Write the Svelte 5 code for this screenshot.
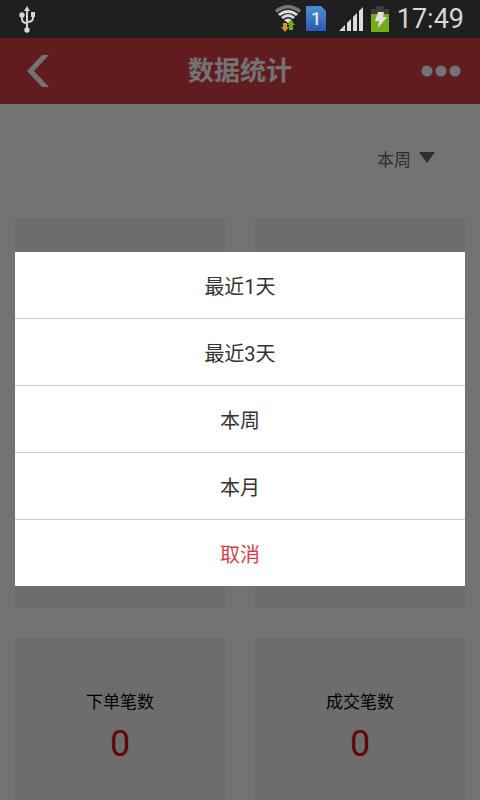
<script lang="ts">
	const ranges = ['最近1天', '最近3天', '本周', '本月'];

	const stats = [
		{ id: 1 },
		{ id: 2 },
		{ id: 3 },
		{ id: 4 },
		{ id: 5, label: '下单笔数', value: 0 },
		{ id: 6, label: '成交笔数', value: 0 },
	];

	let selected = $state('本周');
	let open = $state(true);

	function pick(range: string) {
		selected = range;
		open = false;
	}
</script>

<div class="screen">
	<div class="status">
		<svg class="usb" width="18" height="28" viewBox="0 0 18 28" fill="none" stroke="#d6d6d6" stroke-width="2">
			<path d="M9 5v19M4 10v4c0 3 2 4 5 4M15 9v4c0 3-3 4-6 4" />
			<path d="M9 1l3 5H6zM13 7h4v5h-4z" fill="#d6d6d6" stroke="none" />
			<circle cx="4" cy="10" r="2.700" fill="#d6d6d6" stroke="none" />
			<circle cx="9" cy="25" r="2.700" fill="#d6d6d6" stroke="none" />
		</svg>
		<div class="tray">
			<svg width="28" height="28" viewBox="0 0 28 28">
				<path d="M1 5Q14-5 27 5l-2 3Q14-1 3 8z" fill="#777" />
				<path d="M4 9Q14 1 24 9l-2 2Q14 5 6 11z" fill="#dcdcdc" />
				<path d="M7 12Q14 6 21 12l-2 2Q14 10 9 14z" fill="#dcdcdc" />
				<path d="M10 15Q14 12 18 15l-4 3z" fill="#dcdcdc" />
				<path d="M9 18h4v4h2l-4 5-4-5h2z" fill="#dd8a34" />
				<path d="M17 15l4 5h-2v5h-4v-5h-2z" fill="#74a91c" />
			</svg>
			<svg width="20" height="26" viewBox="0 0 20 26">
				<defs>
					<linearGradient id="sim" x2="0" y2="1">
						<stop offset="0" stop-color="#4b8fd0" />
						<stop offset="1" stop-color="#2c59b5" />
					</linearGradient>
				</defs>
				<path d="M0 0h15l5 5v20H0z" fill="url(#sim)" />
				<text x="10" y="19" text-anchor="middle">1</text>
			</svg>
			<svg class="signal" width="24" height="24" viewBox="0 0 24 24" fill="#dcdcdc">
				<path d="M0 24l6-6v6zM8 24v-8l4-4v12zM14 24V10l4-4v18zM20 24V4l4-4v24z" />
			</svg>
			<svg class="battery" width="18" height="26" viewBox="0 0 18 26">
				<path d="M5 0h8v3h5v5H0V3h5z" fill="#3c3c3c" />
				<path d="M0 8h18v18H0z" fill="#78ab18" />
				<path d="M7 6h6l-1 5h4L7 22l1-7H4z" fill="#e0e0e0" />
			</svg>
			<time>17:49</time>
		</div>
	</div>

	<header>
		<button class="icon" aria-label="返回">
			<svg width="22" height="32" viewBox="0 0 22 32" fill="#fff">
				<path d="M15 0h7L7 16l15 16h-7L0 16z" />
			</svg>
		</button>
		<h1>数据统计</h1>
		<button class="icon more" aria-label="更多">
			<svg width="40" height="12" viewBox="0 0 40 12" fill="#fff">
				<circle cx="6" cy="6" r="5.500" />
				<circle cx="20" cy="6" r="5.500" />
				<circle cx="34" cy="6" r="5.500" />
			</svg>
		</button>
	</header>

	<main>
		<button class="filter" onclick={() => (open = true)}>
			{selected}
			<svg width="16" height="12" viewBox="0 0 16 12" fill="#666"><path d="M0 0h16L8 11z" /></svg>
		</button>
		<div class="grid">
			{#each stats as s (s.id)}
				<section class="card">
					{#if s.label}
						<h2>{s.label}</h2>
						<p>{s.value}</p>
					{/if}
				</section>
			{/each}
		</div>
	</main>

	{#if open}
		<div class="mask">
			<div class="sheet" role="dialog" aria-modal="true">
				{#each ranges as range (range)}
					<button onclick={() => pick(range)}>{range}</button>
				{/each}
				<button class="cancel" onclick={() => (open = false)}>取消</button>
			</div>
		</div>
	{/if}
</div>

<style>
	.screen { position: relative; display: flex; flex-direction: column; height: 100vh; overflow: hidden; background: #fff; font-family: Roboto, "Noto Sans CJK SC", sans-serif; }
	button { margin: 0; padding: 0; border: 0; background: none; font: inherit; color: inherit; cursor: pointer; }
	svg { display: block; flex: none; }

	.status { flex: none; display: flex; align-items: center; justify-content: space-between; height: 38px; padding: 0 16px 0 18px; background: #1f1f1f; }
	.tray { display: flex; align-items: center; }
	.tray text { font-size: 18px; font-weight: 500; fill: #e4e4e4; }
	.tray svg + svg { margin-left: 4px; }
	.tray svg + .signal { margin-left: 13px; }
	.tray svg + .battery { margin-left: 8px; }
	time { margin-left: 8px; font-size: 27px; line-height: 36px; color: #d6d6d6; }

	header { flex: none; display: grid; grid-template-columns: 1fr auto 1fr; align-items: center; height: 66px; padding: 0 19px; background: #d83e45; color: #fff; }
	.icon { display: flex; align-items: center; height: 44px; padding-left: 8px; }
	.more { justify-content: flex-end; padding: 0; }
	h1 { margin: 0; font-size: 26px; line-height: 36px; font-weight: 700; }

	main { flex: none; display: flex; flex-direction: column; padding: 40px 15px 30px; }
	.filter { display: flex; align-items: center; align-self: flex-end; gap: 8px; height: 28px; margin: 0 30px 46px 0; font-size: 17px; color: #666; }
	.grid { display: grid; grid-template-columns: 1fr 1fr; gap: 30px; }
	.card { display: flex; flex-direction: column; align-items: center; justify-content: center; gap: 8px; height: 180px; background: #f2f2f2; }
	h2 { margin: 0; font-size: 17px; line-height: 24px; font-weight: 400; color: #000; }
	p { margin: 0; font-size: 36px; line-height: 44px; color: #d81016; }

	/* the status bar stays above the mask */
	.mask { position: absolute; inset: 38px 0 0; display: flex; align-items: center; padding: 0 15px; background: rgba(0, 0, 0, 0.55); }
	.sheet { flex: 1; display: flex; flex-direction: column; background: #fff; color: #333; }
	.sheet button { height: 66px; font-size: 20px; }
	.sheet button + button { height: 67px; border-top: 1px solid #ccc; }
	.sheet .cancel { color: #d83e45; }
</style>
